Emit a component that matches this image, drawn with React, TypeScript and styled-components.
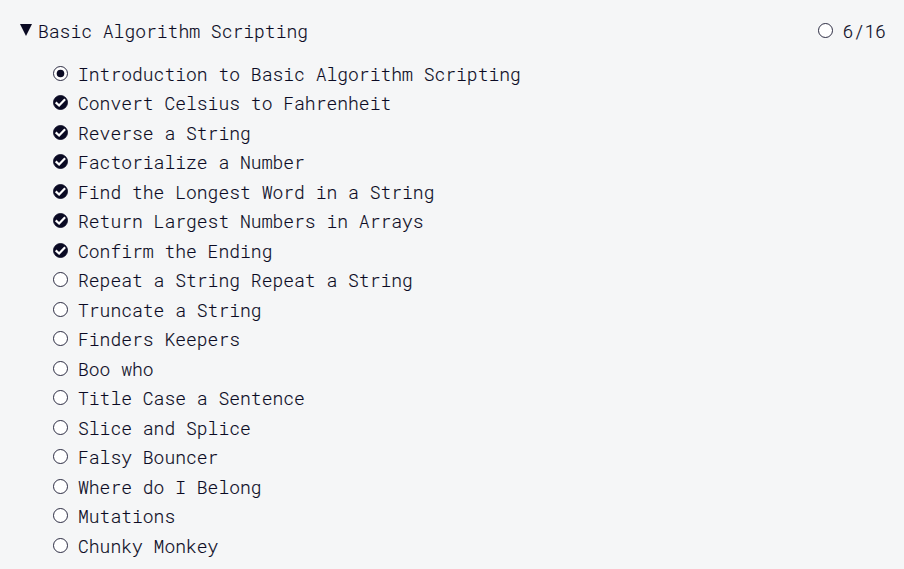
import React from "react";
import styled, { createGlobalStyle } from "styled-components";

const GlobalStyle = createGlobalStyle`
  * { box-sizing: border-box; }
  body {
    margin: 0;
    background: #f5f6f7;
    color: #0a0a23;
    font-family: "Roboto Mono", "Liberation Mono", monospace;
    font-size: 18px;
    font-weight: 300;
    -webkit-text-stroke: 0.15px #0a0a23;
    overflow: hidden;
  }
`;

const Block = styled.section`
  display: flex;
  flex-direction: column;
  height: 569px;
  padding: 15px 18px 0 20px;
`;

const Header = styled.header`
  display: flex;
  align-items: center;
  height: 31px;
  margin-bottom: 13.5px;
`;

const Triangle = styled.svg`
  width: 12px;
  height: 12px;
  margin: 0 6px 1px 0;
`;

const Title = styled.h3`
  flex: 1;
  margin: 0;
  font: inherit;
`;

const Progress = styled.div`
  display: flex;
  align-items: center;
  gap: 10px;
`;

const List = styled.ul`
  list-style: none;
  margin: 0;
  padding: 0 0 0 33px;
`;

const Item = styled.li`
  display: flex;
  align-items: center;
  gap: 10px;
  height: 29.5px;
  line-height: 29.5px;
  white-space: nowrap;

  > svg {
    margin-bottom: 2.5px;
  }
`;

const Icon = styled.svg`
  flex: none;
  width: 15px;
  height: 15px;
`;

type Status = "intro" | "passed" | "open";

const StatusIcon = ({ status }: { status: Status }) => (
  <Icon viewBox="0 0 15 15" aria-hidden="true">
    <circle
      cx="7.5"
      cy="7.5"
      r="7"
      fill={status === "passed" ? "#0a0a23" : "#fff"}
      stroke="#0a0a23"
      strokeWidth="0.85"
    />
    {status === "intro" && <circle cx="7.5" cy="7.5" r="3.8" fill="#0a0a23" />}
    {status === "passed" && (
      <path d="M2.7 7.4 L6.1 10.5 L12.1 4.2" fill="none" stroke="#fff" strokeWidth="2.2" />
    )}
  </Icon>
);

const challenges: { title: string; status: Status }[] = [
  { title: "Introduction to Basic Algorithm Scripting", status: "intro" },
  { title: "Convert Celsius to Fahrenheit", status: "passed" },
  { title: "Reverse a String", status: "passed" },
  { title: "Factorialize a Number", status: "passed" },
  { title: "Find the Longest Word in a String", status: "passed" },
  { title: "Return Largest Numbers in Arrays", status: "passed" },
  { title: "Confirm the Ending", status: "passed" },
  { title: "Repeat a String Repeat a String", status: "open" },
  { title: "Truncate a String", status: "open" },
  { title: "Finders Keepers", status: "open" },
  { title: "Boo who", status: "open" },
  { title: "Title Case a Sentence", status: "open" },
  { title: "Slice and Splice", status: "open" },
  { title: "Falsy Bouncer", status: "open" },
  { title: "Where do I Belong", status: "open" },
  { title: "Mutations", status: "open" },
  { title: "Chunky Monkey", status: "open" },
];

export default function App() {
  return (
    <>
      <GlobalStyle />
      <Block>
        <Header>
          <Triangle viewBox="0 0 12 12" aria-hidden="true">
            <path d="M0 0H12L6 12Z" fill="#0a0a23" />
          </Triangle>
          <Title>Basic Algorithm Scripting</Title>
          <Progress>
            <StatusIcon status="open" />
            <span>6/16</span>
          </Progress>
        </Header>
        <List>
          {challenges.map(({ title, status }) => (
            <Item key={title}>
              <StatusIcon status={status} />
              <span>{title}</span>
            </Item>
          ))}
        </List>
      </Block>
    </>
  );
}
